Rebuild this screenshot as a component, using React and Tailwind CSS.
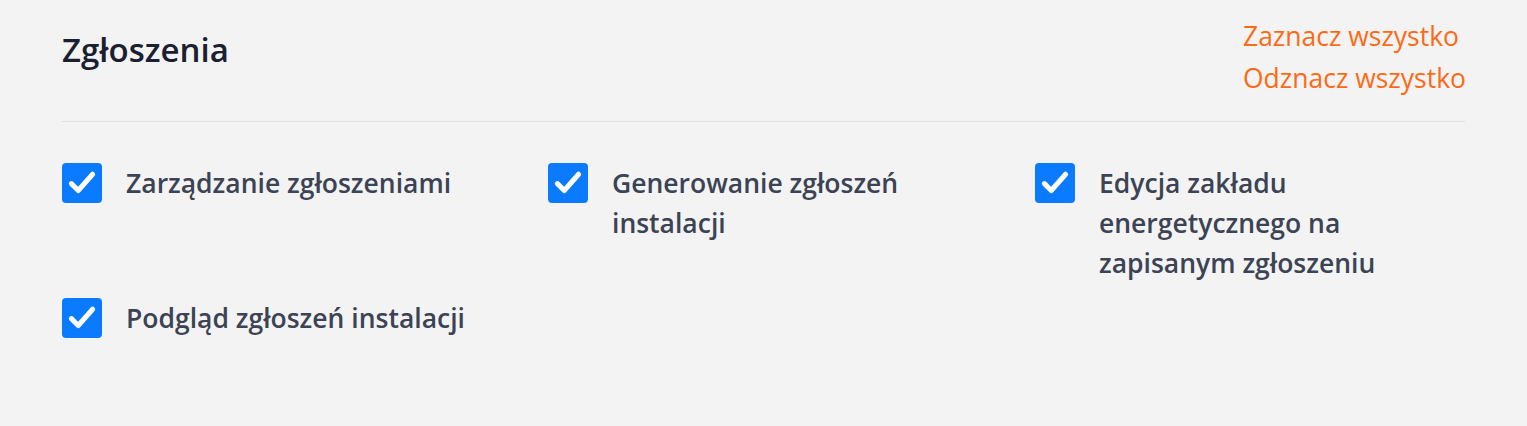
import React, { useState } from "react";

const permissions = [
  { id: "manage", label: "Zarządzanie zgłoszeniami" },
  { id: "generate", label: "Generowanie zgłoszeń instalacji" },
  { id: "edit", label: "Edycja zakładu energetycznego na zapisanym zgłoszeniu" },
  { id: "preview", label: "Podgląd zgłoszeń instalacji" },
];

const Checkbox = ({ checked, onChange, label }) => (
  <label className="flex items-start gap-6 cursor-pointer">
    <span
      onClick={onChange}
      className={`flex shrink-0 items-center justify-center w-10 h-10 rounded-[4px] ${
        checked ? "bg-[#0a7bff]" : "bg-white border border-gray-300"
      }`}
    >
      {checked && (
        <svg className="w-[30px] h-[30px]" viewBox="0 0 24 24" fill="none">
          <path
            d="M3.5 12.5L9 18L20.5 5"
            stroke="#ffffff"
            strokeWidth="4"
            strokeLinecap="round"
            strokeLinejoin="round"
          />
        </svg>
      )}
    </span>
    <span className="max-w-[358px] text-[26.5px] leading-[40px] font-semibold text-[#3b4354]">
      {label}
    </span>
  </label>
);

export default function App() {
  const [checked, setChecked] = useState(
    Object.fromEntries(permissions.map((p) => [p.id, true]))
  );

  const setAll = (value) =>
    setChecked(Object.fromEntries(permissions.map((p) => [p.id, value])));

  return (
    <div
      className="min-h-[426px] bg-[#f3f3f3] px-[62px] pt-[15px]"
      style={{ fontFamily: '"Open Sans", "Noto Sans", sans-serif' }}
    >
      <div className="flex items-start justify-between">
        <h2 className="mt-[14px] text-[33px] leading-[42px] font-semibold text-[#1b2030]">
          Zgłoszenia
        </h2>
        <div className="flex flex-col items-start mr-[-1px]">
          <button
            type="button"
            onClick={() => setAll(true)}
            className="text-[26.5px] leading-[42px] text-[#fd6a16]"
          >
            Zaznacz wszystko
          </button>
          <button
            type="button"
            onClick={() => setAll(false)}
            className="text-[26.5px] leading-[42px] text-[#fd6a16]"
          >
            Odznacz wszystko
          </button>
        </div>
      </div>

      <div className="mt-[22px] border-t border-[#e1e1e5]" />

      <div className="mt-[41px] grid grid-cols-[486px_487px_1fr] gap-y-[15px]">
        {permissions.map((p) => (
          <Checkbox
            key={p.id}
            label={p.label}
            checked={checked[p.id]}
            onChange={() => setChecked((prev) => ({ ...prev, [p.id]: !prev[p.id] }))}
          />
        ))}
      </div>
    </div>
  );
}
